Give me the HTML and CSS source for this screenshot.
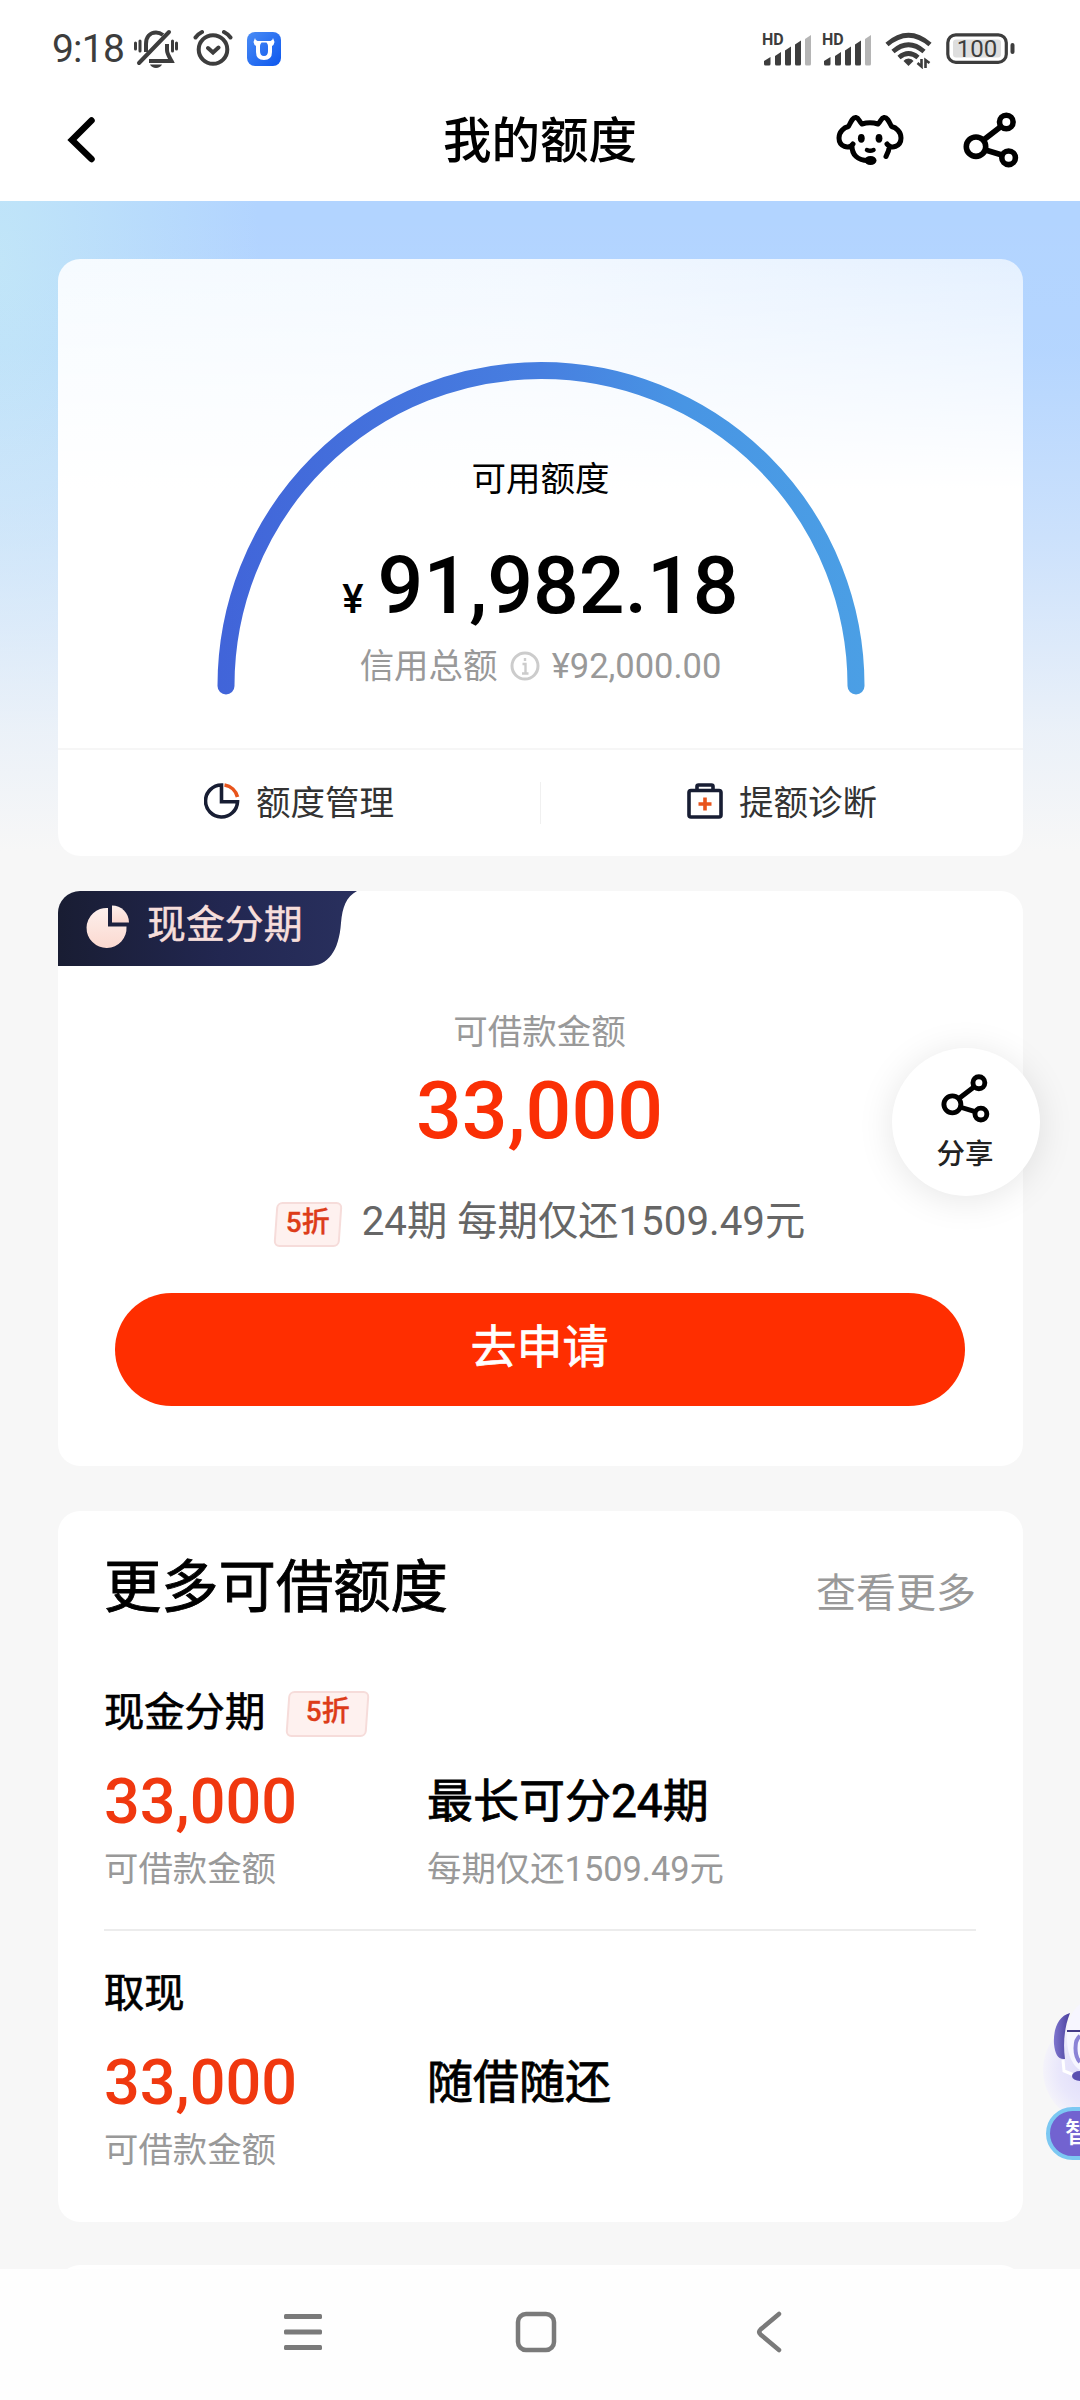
FILE: index.html
```html
<!DOCTYPE html>
<html lang="zh-CN">
<head>
<meta charset="utf-8">
<title>我的额度</title>
<link rel="stylesheet" href="styles.css">
</head>
<body>
<svg class="defs" width="0" height="0" aria-hidden="true">
  <symbol id="share" viewBox="0 0 56 56">
    <g fill="none" stroke="currentColor" stroke-width="5.6">
      <circle cx="13" cy="34.7" r="9.7"/>
      <circle cx="43.3" cy="10" r="6.8"/>
      <circle cx="45.6" cy="45.8" r="6.8"/>
      <path d="M20.5 28L38 14.5M22.5 38L39 43"/>
    </g>
  </symbol>
  <symbol id="bars" viewBox="0 0 52 36">
    <g fill="#3d3d3d">
      <path d="M2 29l6.500-4v7a1.500 1.500 0 0 1-1.500 1.500h-3.500a1.500 1.500 0 0 1-1.500-1.500z"/>
      <path d="M13 24l6-4v12a1.500 1.500 0 0 1-1.500 1.500h-3a1.500 1.500 0 0 1-1.500-1.500z"/>
      <path d="M23 18.500l6-4v17.500a1.500 1.500 0 0 1-1.500 1.500h-3a1.500 1.500 0 0 1-1.500-1.500z"/>
      <path d="M33 12.500l6-4v23.500a1.500 1.500 0 0 1-1.500 1.500h-3a1.500 1.500 0 0 1-1.500-1.500z"/>
    </g>
    <path fill="#b5b5b5" d="M43 7l6-4v29a1.500 1.500 0 0 1-1.500 1.500h-3a1.500 1.500 0 0 1-1.500-1.500z"/>
  </symbol>
</svg>

<div class="screen">
  <header class="top">
    <div class="status">
      <div class="status-left">
        <span class="clock">9:18</span>
        <svg class="ic-bell" width="46" height="40" viewBox="0 0 46 40" fill="none" stroke="#3d3d3d" stroke-width="4">
          <path d="M13 23V15C13 8 17 3.500 23 3.500C26 3.500 28 4.500 30 6"/>
          <path d="M34 15V21C34 25 37 29 38.500 32H16"/>
          <path d="M6 34L36 3" stroke-linecap="round"/>
          <path d="M17 35.500H29C27 40 19 40 17 35.500Z" fill="#3d3d3d" stroke="none"/>
          <path d="M2.500 14V20M7 12V22M39.500 12V22M43.500 14V20" stroke-width="3" stroke-linecap="round"/>
        </svg>
        <svg class="ic-alarm" width="40" height="38" viewBox="0 0 40 38" fill="none" stroke="#3d3d3d" stroke-width="4" stroke-linecap="round">
          <circle cx="20" cy="20.500" r="14.300"/>
          <path d="M2.500 8.500Q5 5 9 3M37.500 8.500Q35 5 31 3M15 19L20 23.500L25.500 18.500"/>
        </svg>
        <svg class="ic-app" width="34" height="34" viewBox="0 0 34 34">
          <defs><linearGradient id="app" x1="0" y1="0" x2="1" y2="1"><stop offset="0" stop-color="#4a8cf5"/><stop offset="1" stop-color="#0d57ee"/></linearGradient></defs>
          <rect width="34" height="34" rx="8" fill="url(#app)"/>
          <path fill-rule="evenodd" d="M8 6Q8 8 10.500 9H23.500Q26 8 26 6L27.500 10Q27 13 25 14V20Q25 28 17 28T9 20V14Q7 13 6.500 10ZM14.500 10.500Q13 12 13 14V19Q13 24 17 24T21 19V14Q21 12 19.500 10.500Z" fill="#fff"/>
        </svg>
      </div>
      <div class="status-right">
        <svg width="52" height="36"><text x="0" y="13" class="hd">HD</text><use href="#bars"/></svg>
        <svg class="sig2" width="52" height="36"><text x="0" y="13" class="hd">HD</text><use href="#bars"/></svg>
        <svg class="wifi" width="48" height="38" viewBox="0 0 48 38" fill="none" stroke="#3d3d3d" stroke-width="4.800">
          <path d="M2 13.500Q23.500-5 45 13.500M8 20.500Q23.500 7 39 20.500M14 26.500Q23.500 18.500 33 26.500"/>
          <path d="M23.500 27.500Q27 27.500 28.500 30L23.500 35L18.500 30Q20 27.500 23.500 27.500Z" fill="#3d3d3d" stroke="none"/>
          <path d="M36.500 28V35.500L32.500 32M40.500 37V29L44.500 32" stroke-width="2.600"/>
        </svg>
        <svg class="battery" width="70" height="32" viewBox="0 0 70 32">
          <rect x="1.800" y="1.800" width="58.500" height="27.500" rx="8" fill="none" stroke="#3d3d3d" stroke-width="3.200"/>
          <rect x="7" y="6.500" width="48" height="18" rx="3" fill="#dedede"/>
          <rect x="64.500" y="10" width="4" height="11" rx="2" fill="#3d3d3d"/>
          <text x="31" y="24" class="pct">100</text>
        </svg>
      </div>
    </div>
    <div class="nav">
      <svg class="back" width="30" height="50" viewBox="0 0 30 50" fill="none" stroke="#000" stroke-width="6.500" stroke-linecap="round"><path d="M24.500 5.500L5 25L24.500 44"/></svg>
      <h1>我的额度</h1>
      <div class="nav-icons">
        <svg width="68" height="56" viewBox="0 0 68 56" fill="none" stroke="#000" stroke-width="5" stroke-linejoin="round" stroke-linecap="round">
          <path d="M17 32C13 38 3 34.500 3 26C3 19.500 8 15.500 12.500 14.500C15 9.500 17 5 20 5.500C23 6 23 9.500 26 12C31 10.500 37 10.500 42 12C45 9.500 45 6 48 5.500C51 5 53 9.500 55.500 14.500C60 15.500 65 19.500 65 26C65 34.500 55 38 51 32M16 33C15.500 43 22 48.500 32 48.500M53.500 34Q53 39 50 44.500"/>
          <ellipse cx="25.300" cy="26.300" rx="3.400" ry="4.400" fill="#000" stroke="none"/>
          <ellipse cx="43" cy="26.300" rx="3.400" ry="4.400" fill="#000" stroke="none"/>
          <path d="M31 38Q34 39.500 37.500 38" stroke-width="4.500"/>
          <ellipse cx="34.500" cy="48.500" rx="6" ry="4.500" fill="#000" stroke="none"/>
        </svg>
        <svg width="56" height="56"><use href="#share"/></svg>
      </div>
    </div>
  </header>

  <main class="content">
    <section class="card limit">
      <div class="gauge">
        <svg class="arc" width="648" height="336" viewBox="0 0 648 336">
          <defs><linearGradient id="arc" gradientUnits="userSpaceOnUse" x1="0" y1="0" x2="648" y2="0"><stop offset="0" stop-color="#4164d9"/><stop offset=".5" stop-color="#477fe0"/><stop offset=".72" stop-color="#4895e4"/><stop offset="1" stop-color="#4b9fe5"/></linearGradient></defs>
          <path d="M9 324V323.500A315 315 0 0 1 639 323.500V324" fill="none" stroke="url(#arc)" stroke-width="17" stroke-linecap="round"/>
        </svg>
        <div class="gauge-text">
          <div class="g-label">可用额度</div>
          <div class="g-amount"><span class="yen">¥</span><span>91,982.18</span></div>
          <div class="g-total"><span>信用总额</span>
            <svg width="30" height="30" viewBox="0 0 30 30" fill="none" stroke="#ccc"><circle cx="15" cy="15" r="13" stroke-width="3"/><path d="M15 7V10M12.500 13H15.500V22M12 22.500H18.500" stroke-width="2.400"/></svg>
            <span>¥92,000.00</span></div>
        </div>
      </div>
      <div class="actions">
        <div class="action">
          <svg width="36" height="36" viewBox="0 0 36 36" fill="none" stroke-width="3.600"><path d="M17.500 2A16 16 0 1 0 33.500 18.800H17.500Z" stroke="#171d33"/><path d="M20.500 2A16 16 0 0 1 33.500 14" stroke="#e8541c"/></svg>
          <span>额度管理</span>
        </div>
        <i class="split"></i>
        <div class="action">
          <svg width="36" height="36" viewBox="0 0 36 36" fill="none" stroke-width="3.600"><path d="M10 7V3.500Q10 2 11.500 2H24.500Q26 2 26 3.500V7M2 9.500Q2 7.500 4 7.500H32Q34 7.500 34 9.500V32Q34 34 32 34H4Q2 34 2 32Z" stroke="#171d33"/><path d="M18 14.500V27.500M11.500 21H24.500" stroke="#e8541c"/></svg>
          <span>提额诊断</span>
        </div>
      </div>
    </section>

    <section class="card loan">
      <div class="tag">
        <svg class="tag-bg" width="300" height="75" viewBox="0 0 300 75">
          <defs><linearGradient id="tagbg"><stop offset="0" stop-color="#191d33"/><stop offset=".55" stop-color="#222751"/><stop offset="1" stop-color="#29305e"/></linearGradient>
          <linearGradient id="pie" x1="0" y1="0" x2="0" y2="1"><stop offset="0" stop-color="#fdf0ec"/><stop offset="1" stop-color="#fbd9d0"/></linearGradient></defs>
          <path d="M0 0H299C288 6 284.500 16 283 32C281 60 270 75 251 75H0Z" fill="url(#tagbg)"/>
        </svg>
        <div class="tag-row">
          <svg width="44" height="44" viewBox="0 0 44 44" fill="url(#pie)"><path d="M22 3V21.500H40.500A20 20 0 1 1 22 3Z"/><path d="M26 0.500A17 17 0 0 1 43 17.500H26Z"/></svg>
          <span>现金分期</span>
        </div>
      </div>
      <div class="loan-label">可借款金额</div>
      <div class="loan-amount">33,000</div>
      <div class="plan"><span class="off"><b>5折</b></span><span>24期 每期仅还1509.49元</span></div>
      <button class="apply">去申请</button>
    </section>

    <section class="card more">
      <div class="more-head"><h2>更多可借额度</h2><a>查看更多</a></div>
      <div class="item">
        <div class="name"><span>现金分期</span><span class="off wide"><b>5折</b></span></div>
        <div class="cols">
          <div><div class="num">33,000</div><div class="sub">可借款金额</div></div>
          <div><div class="desc">最长可分24期</div><div class="sub">每期仅还1509.49元</div></div>
        </div>
      </div>
      <div class="item">
        <div class="name"><span>取现</span></div>
        <div class="cols">
          <div><div class="num">33,000</div><div class="sub">可借款金额</div></div>
          <div><div class="desc">随借随还</div></div>
        </div>
      </div>
    </section>
    <section class="card next"></section>
  </main>

  <footer class="sysnav">
    <svg width="38" height="38" viewBox="0 0 38 38" fill="#7a7a7a"><rect y="1" width="38" height="5" rx="1.500"/><rect y="16.500" width="38" height="5" rx="1.500"/><rect y="32" width="38" height="5" rx="1.500"/></svg>
    <svg class="home" width="42" height="42" viewBox="0 0 42 42"><rect x="3" y="3" width="36" height="36" rx="8" fill="none" stroke="#7a7a7a" stroke-width="4.500"/></svg>
    <svg width="26" height="42" viewBox="0 0 26 42" fill="none" stroke="#7a7a7a" stroke-width="4.500" stroke-linecap="round"><path d="M23 3L4.500 18.500Q2 21 4.500 23.500L23 39"/></svg>
  </footer>

  <div class="float-share">
    <svg width="49" height="49"><use href="#share"/></svg>
    <span>分享</span>
  </div>

  <div class="bot">
    <svg width="40" height="120" viewBox="0 0 40 120">
      <defs>
        <radialGradient id="halo"><stop offset="0" stop-color="#dcd8fa"/><stop offset=".7" stop-color="#e9e7fb"/><stop offset="1" stop-color="#f4f3fa"/></radialGradient>
        <linearGradient id="ear" x1="0" y1="0" x2="1" y2="0"><stop offset="0" stop-color="#7f76cf"/><stop offset="1" stop-color="#4a409d"/></linearGradient>
      </defs>
      <circle cx="56" cy="70" r="53" fill="url(#halo)"/>
      <path d="M40 4C30 12 26 26 27 42C28 56 33 66 40 70Z" fill="#f7f6ff"/>
      <path d="M30 13C18 16 13 30 14 44C15 54 18 60 25 59C23 45 24 28 30 13Z" fill="url(#ear)"/>
      <path d="M27 31H40" stroke="#453b86" stroke-width="2"/>
      <path d="M40 36C34 40 34 56 40 62" fill="none" stroke="#8b83d6" stroke-width="4"/>
      <path d="M23 60L24 71L34 75" fill="none" stroke="#fff" stroke-width="3"/>
      <ellipse cx="40" cy="76" rx="8" ry="5" fill="#5a4fb0"/>
    </svg>
    <div class="bot-pill">智</div>
  </div>
</div>
</body>
</html>
```

FILE: styles.css
```css
* { box-sizing: border-box; margin: 0; padding: 0; }
body {
  font-family: Roboto, "Noto Sans CJK SC", sans-serif;
  color: #000;
  background: #f7f7f7;
}
svg { display: block; flex: none; }
.defs { position: absolute; }
.screen {
  position: relative;
  width: 1080px;
  height: 2400px;
  overflow: hidden;
  display: flex;
  flex-direction: column;
  background: #f7f7f7;
}

/* status bar and title bar */
.top { height: 201px; background: #fff; flex: none; }
.status {
  height: 98px;
  display: flex;
  justify-content: space-between;
  padding: 0 64px 0 52px;
}
.status-left, .status-right { display: flex; align-items: flex-start; }
.clock {
  width: 73px;
  margin-top: 25px;
  font-size: 39px;
  line-height: 48px;
  letter-spacing: -.8px;
  color: #3d3d3d;
}
.ic-bell { margin: 29px 0 0 8px; }
.ic-alarm { margin: 29px 0 0 14px; }
.ic-app { margin: 32px 0 0 14px; }
.status-right > svg { margin-top: 32px; }
.status-right .sig2 { margin-left: 8px; }
.status-right .wifi { margin: 31px 0 0 11px; }
.status-right .battery { margin: 33px 0 0 13px; }
.hd { font: 700 16px Roboto, sans-serif; fill: #3d3d3d; }
.pct { font: 400 24px Roboto, sans-serif; fill: #3d3d3d; text-anchor: middle; }
.nav {
  height: 84px;
  display: grid;
  grid-template-columns: 1fr auto 1fr;
  align-items: center;
  padding: 0 61px 0 67px;
}
h1 {
  font-size: 48.500px;
  line-height: 60px;
  font-weight: 500;
  padding: 3px 6px 0 0;
}
.nav-icons { display: flex; gap: 59px; justify-self: end; }

/* page body */
.content {
  flex: 1;
  min-height: 0;
  overflow: hidden;
  padding: 58px 57px 0 58px;
  background:
    linear-gradient(180deg, rgba(247,247,247,0) 0, rgba(247,247,247,.04) 150px, rgba(247,247,247,.38) 340px, rgba(247,247,247,.82) 530px, #f7f7f7 650px),
    radial-gradient(ellipse 260px 560px at 0 60px, #c0e5f8 0, rgba(192,229,248,.5) 50%, rgba(192,229,248,0) 100%),
    #b2d4ff;
}
.card { background: #fff; border-radius: 22px; overflow: hidden; }

.limit {
  height: 597px;
  background:
    linear-gradient(180deg, rgba(255,255,255,0) 0, #fff 230px),
    linear-gradient(90deg, #f6fbff 0, #f2f8ff 50%, #e4f0ff 100%);
}
.gauge { display: grid; height: 491px; justify-items: center; border-bottom: 2px solid #f6f6f6; }
.gauge > * { grid-area: 1 / 1; }
.arc { margin-top: 103px; }
.gauge-text { padding-top: 200px; display: flex; flex-direction: column; align-items: center; }
.g-label { font-size: 34.500px; line-height: 40px; }
.g-amount {
  height: 90px;
  margin-top: 42px;
  display: flex;
  align-items: baseline;
  gap: 14px;
  font-size: 80.600px;
  line-height: 90px;
  font-weight: 500;
}
.yen { font-size: 40px; }
.g-total {
  margin-top: 15px;
  display: flex;
  align-items: center;
  gap: 12px;
  font-size: 34.500px;
  line-height: 40px;
  color: #999;
}
.actions { display: flex; align-items: center; height: 106px; }
.action { flex: 1; display: flex; align-items: center; justify-content: center; gap: 16px; font-size: 34.500px; line-height: 40px; color: #333; }
.action svg { margin-top: -4px; }
.split { width: 1px; height: 42px; background: #f0f0f0; }

.loan { margin-top: 35px; height: 575px; padding-right: 2px; display: flex; flex-direction: column; align-items: center; }
.tag { align-self: flex-start; display: grid; height: 75px; }
.tag > * { grid-area: 1 / 1; }
.tag-row { display: flex; gap: 17px; padding: 14px 0 0 28px; font-size: 38.900px; line-height: 40px; color: #f6dedb; -webkit-text-stroke: .5px #f6dedb; }
.loan-label { margin-top: 46px; font-size: 34.500px; line-height: 40px; color: #999; }
.loan-amount { margin-top: 14px; font-size: 80.600px; line-height: 90px; font-weight: 500; color: #fa2f05; }
.plan { height: 46px; margin-top: 43px; display: flex; align-items: center; gap: 20px; font-size: 40.300px; line-height: 46px; color: #666; }
.off {
  position: relative;
  z-index: 0;
  width: 68px;
  height: 45px;
  margin-top: 5px;
  text-align: center;
  font-size: 28px;
  line-height: 42px;
  color: #dd3c19;
}
.off::before {
  content: "";
  position: absolute;
  inset: 0 1px;
  z-index: -1;
  transform: skewX(-4deg);
  border: 2px solid #f6dcda;
  border-radius: 6px;
  background: #fef1ef;
}
.off b { font-weight: 500; -webkit-text-stroke: .3px #dd3c19; }
.wide { width: 83px; height: 46px; margin-top: 1px; line-height: 42px; }
.apply {
  margin-top: 48px;
  width: 850px;
  height: 113px;
  padding-bottom: 5px;
  border: 0;
  border-radius: 57px;
  background: #ff2e00;
  color: #fff;
  font: 400 46px/60px Roboto, "Noto Sans CJK SC", sans-serif;
  -webkit-text-stroke: .7px #fff;
}

.more { margin-top: 45px; height: 711px; padding: 42px 47px 0 46px; }
.more-head { display: flex; justify-content: space-between; align-items: flex-end; }
h2 { font-size: 57.300px; line-height: 70px; font-weight: 400; -webkit-text-stroke: .9px #000; }
.more-head a { font-size: 40px; line-height: 58px; color: #999; }
.item { margin-top: 66px; }
.item + .item { margin-top: 40px; padding-top: 39px; border-top: 2px solid #ececec; }
.name { height: 48px; display: flex; gap: 21px; align-items: center; font-size: 40.300px; line-height: 48px; -webkit-text-stroke: .7px #000; }
.cols { margin-top: 30px; display: grid; grid-template-columns: 323px 1fr; }
.num { font-size: 63px; line-height: 70px; font-weight: 500; color: #f0380f; }
.desc { margin-top: -1px; font-size: 46px; line-height: 71px; -webkit-text-stroke: .8px #000; }
.sub { margin-top: 12px; font-size: 34.400px; line-height: 40px; color: #999; }
.next { margin-top: 43px; height: 60px; }

/* system navigation */
.sysnav {
  flex: none;
  height: 131px;
  background: #fefefe;
  display: flex;
  align-items: center;
  padding: 0 298px 6px 284px;
  justify-content: space-between;
}
.home { margin-right: 6px; }

/* floating controls */
.float-share {
  position: absolute;
  left: 892px;
  top: 1048px;
  width: 148px;
  height: 148px;
  border-radius: 50%;
  background: #fff;
  box-shadow: 0 4px 36px rgba(0,0,0,.1);
  display: flex;
  flex-direction: column;
  align-items: center;
  padding: 26px 2px 0 0;
  font-size: 28.500px;
  line-height: 36px;
  font-weight: 500;
  color: #222;
}
.float-share svg { color: #000; }
.float-share span { margin-top: 14px; }
.bot { position: absolute; left: 1040px; top: 2000px; width: 40px; height: 170px; overflow: hidden; }
.bot-pill {
  position: absolute;
  left: 6px;
  top: 107px;
  width: 110px;
  height: 53px;
  border: 4px solid #7cc8f2;
  border-radius: 27px;
  background: #7263d0;
  color: #fff;
  font-size: 28px;
  line-height: 46px;
  font-weight: 500;
  padding-left: 15px;
}
```
